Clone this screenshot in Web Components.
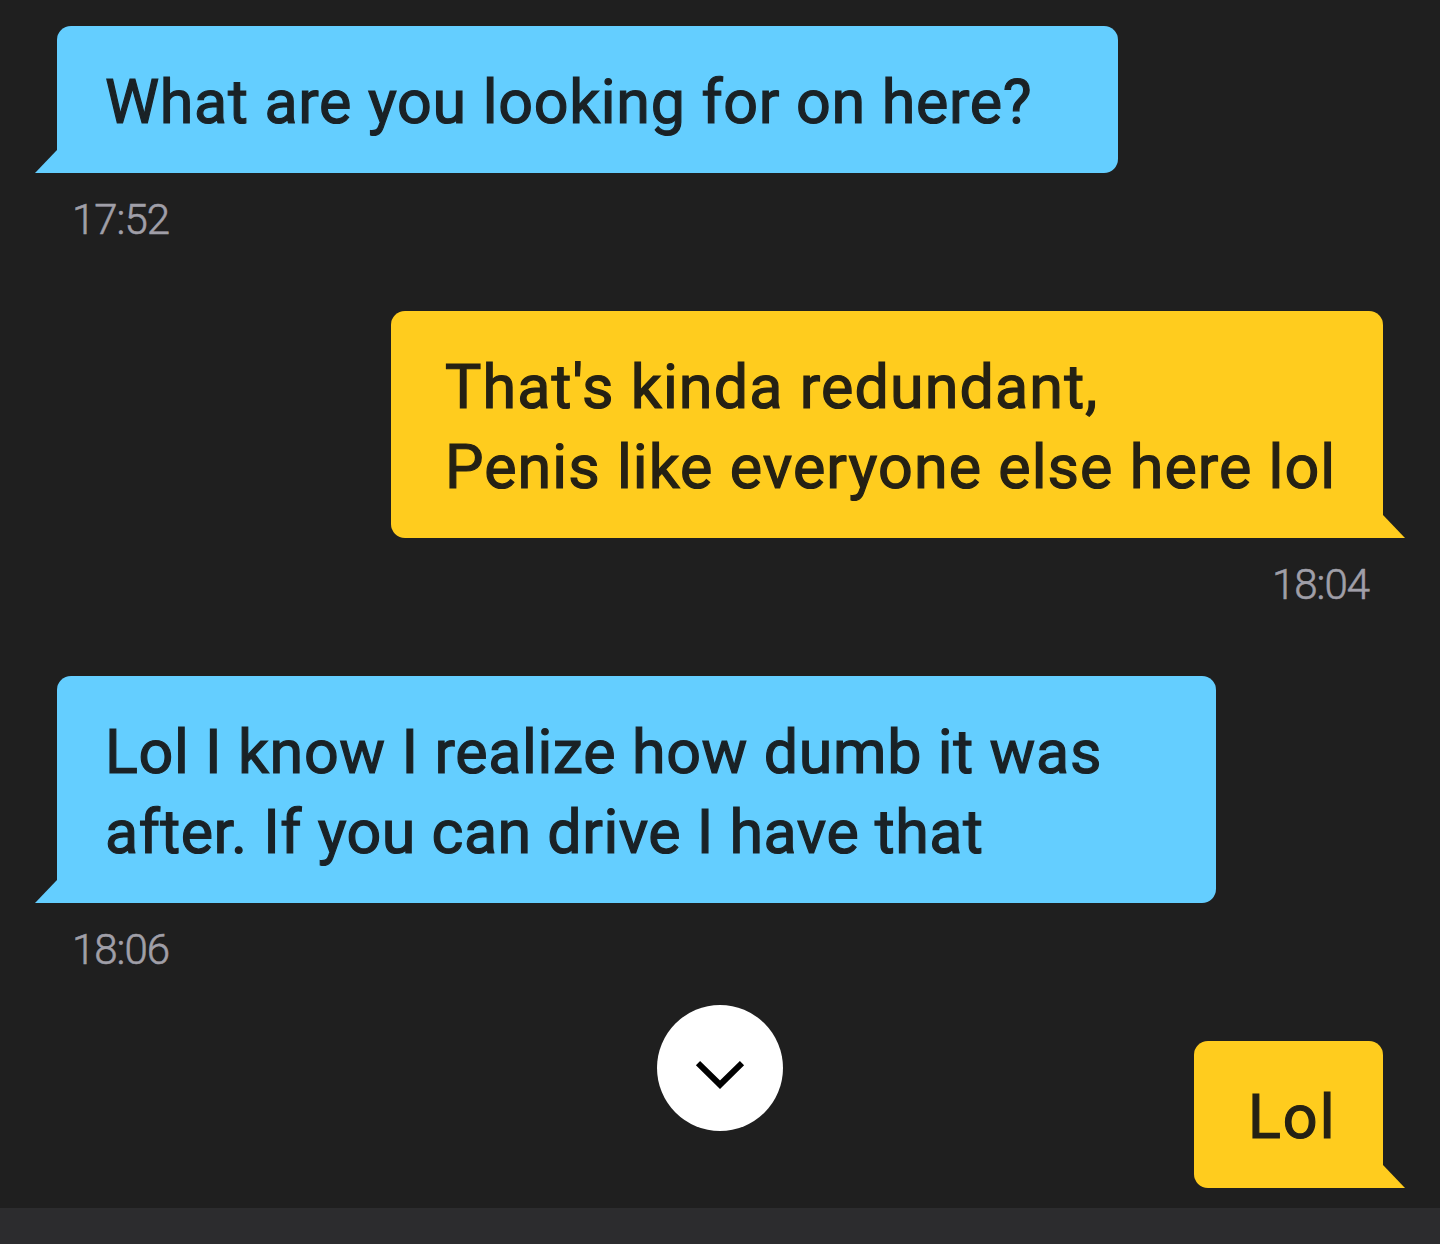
<!DOCTYPE html>
<html lang="en">
<head>
<meta charset="utf-8">
<title>Chat</title>
<style>
  body {
    margin: 0;
    background: #1f1f1f;
    font-family: Roboto, "Liberation Sans", sans-serif;
  }
</style>
</head>
<body>
<chat-thread>
  <chat-message time="17:52" style="--width: 1061px">
    <chat-line style="--tracking: 0.69px">What are you looking for on here?</chat-line>
  </chat-message>
  <chat-message sent time="18:04" style="--width: 992px">
    <chat-line style="--tracking: 1.12px">That's kinda redundant,</chat-line>
    <chat-line style="--tracking: 1.06px">Penis like everyone else here lol</chat-line>
  </chat-message>
  <chat-message time="18:06" style="--width: 1159px">
    <chat-line style="--tracking: 0.62px">Lol I know I realize how dumb it was</chat-line>
    <chat-line style="--tracking: 0.48px">after. If you can drive I have that</chat-line>
  </chat-message>
  <chat-message sent style="--width: 189px">
    <chat-line style="--tracking: 2px">Lol</chat-line>
  </chat-message>
  <scroll-button slot="overlay"></scroll-button>
</chat-thread>

<script>
// Full height conversation with the top edge of the input bar below it
class ChatThread extends HTMLElement {
  constructor() {
    super();
    this.attachShadow({ mode: "open" });
    this.shadowRoot.innerHTML = `
  <style>
    :host {
      display: flex;
      flex-direction: column;
      position: relative;
      height: 1244px;
      overflow: hidden;
    }
    .messages {
      display: flex;
      flex-direction: column;
      flex: 1;
      box-sizing: border-box;
      padding: 26px 57px 0;
    }
    .input-bar {
      height: 36px;
      background: #2c2c2e;
    }
  </style>
  <div class="messages"><slot></slot></div>
  <div class="input-bar"></div>
  <slot name="overlay"></slot>
`;
  }
}

// A bubble with its tail, and the time under it
class ChatMessage extends HTMLElement {
  constructor() {
    super();
    this.attachShadow({ mode: "open" });
  }

  connectedCallback() {
    const time = this.getAttribute("time");
    this.shadowRoot.innerHTML = `
  <style>
    :host {
      --bubble: #64ceff;
      display: flex;
      flex-direction: column;
      align-items: flex-start;
      color: #1a2226;
    }
    :host([sent]) {
      --bubble: #ffcc1e;
      align-items: flex-end;
      color: #252114;
    }
    .bubble {
      position: relative;
      box-sizing: border-box;
      width: var(--width);
      padding: 36px 0 31px 48px;
      border-radius: 14px 14px 14px 0;
      background: var(--bubble);
    }
    :host([sent]) .bubble {
      padding-left: 54px;
      border-radius: 14px 14px 0 14px;
    }
    /* the tail hangs outside the bottom corner */
    .bubble::after {
      content: "";
      position: absolute;
      bottom: 0;
      left: -22px;
      width: 23px;
      height: 23px;
      background: var(--bubble);
      clip-path: polygon(0 100%, 22px 0, 100% 0, 100% 100%);
    }
    :host([sent]) .bubble::after {
      left: auto;
      right: -22px;
      clip-path: polygon(0 0, 1px 0, 100% 100%, 0 100%);
    }
    .time {
      margin: 22px 14px 66px 15px;
      font-size: 42px;
      font-weight: 300;
      line-height: 50px;
      letter-spacing: -1px;
      -webkit-text-stroke: 0.6px;
      color: #a09fa8;
    }
  </style>
  <div class="bubble"><slot></slot></div>
  ${time ? `<div class="time">${time}</div>` : ""}
`;
  }
}

// One line of message text
class ChatLine extends HTMLElement {
  constructor() {
    super();
    this.attachShadow({ mode: "open" });
    this.shadowRoot.innerHTML = `
  <style>
    :host {
      display: block;
      font-size: 61px;
      font-weight: 400;
      line-height: 80px;
      letter-spacing: var(--tracking, 0);
      white-space: nowrap;
      -webkit-text-stroke: 1.2px;
    }
  </style>
  <slot></slot>
`;
  }
}

// Round button that jumps to the newest message
class ScrollButton extends HTMLElement {
  constructor() {
    super();
    this.attachShadow({ mode: "open" });
    this.shadowRoot.innerHTML = `
  <style>
    :host {
      position: absolute;
      left: 657px;
      top: 1005px;
      width: 126px;
      height: 126px;
      border-radius: 50%;
      background: #fff;
    }
    svg {
      display: block;
    }
  </style>
  <svg width="126" height="126" viewBox="0 0 126 126" fill="none" stroke="#000" stroke-width="6">
    <path d="M41 58.2 63 79.7 85 58.2"/>
  </svg>
`;
  }
}

customElements.define("chat-thread", ChatThread);
customElements.define("chat-message", ChatMessage);
customElements.define("chat-line", ChatLine);
customElements.define("scroll-button", ScrollButton);
</script>
</body>
</html>
